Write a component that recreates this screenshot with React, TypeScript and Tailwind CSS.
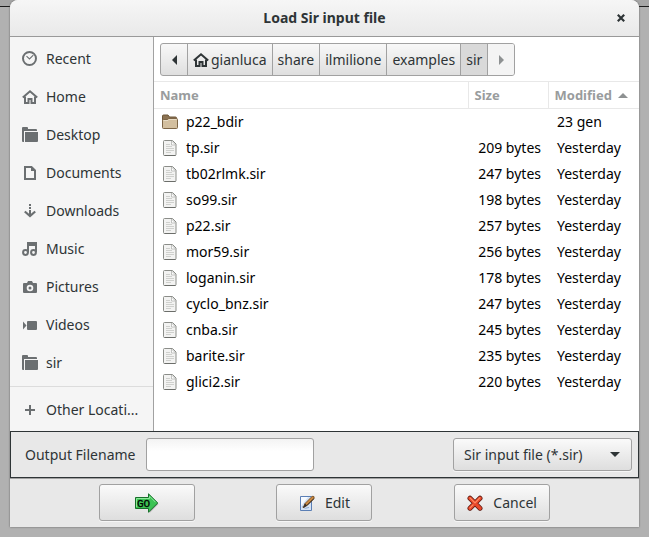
import { useState } from "react"

const iconClass = "size-4 shrink-0 text-[#6b6f71]"

const HomeShape: React.FC = () => (
    <>
        <path d="M.8 8.4 8 2.2l7.2 6.2" fill="none" stroke="currentColor" strokeWidth="2" />
        <path d="M3 7.5V14h3.5v-4h3v4H13V7.5" fill="none" stroke="currentColor" strokeWidth="2" />
    </>
)

const shapes: Record<string, React.ReactNode> = {
    recent: (
        <>
            <circle cx="7.5" cy="7.5" r="6.5" fill="none" stroke="currentColor" strokeWidth="2" />
            <path d="M4.5 5.2 7.5 8l3.8-3.8" fill="none" stroke="currentColor" strokeWidth="1.1" />
        </>
    ),
    home: <HomeShape />,
    folder: (
        <>
            <path d="M0 1q0-1 1-1h4q1 0 1 1v1h8q1 0 1 1v1H2v11H1q-1 0-1-1z" fill="currentColor" />
            <path d="M3 5h13v9q0 1-1 1H3z" fill="currentColor" />
        </>
    ),
    documents: (
        <>
            <path d="M3 2h6.5L13 5.5V14H3z" fill="none" stroke="currentColor" strokeWidth="2" />
            <path d="M9 2v4h4z" fill="currentColor" />
        </>
    ),
    downloads: (
        <>
            <path d="M7 1h2v2H7zM7 4h2v2H7zM7 7h2v6H7z" fill="currentColor" />
            <path d="M2.8 8.5 8 13l5.2-4.5" fill="none" stroke="currentColor" strokeWidth="2.2" />
        </>
    ),
    music: (
        <>
            <path d="M6 11.5V2h8v9M6 4h8" fill="none" stroke="currentColor" strokeWidth="2" />
            <circle cx="3.5" cy="11.5" r="2.4" fill="none" stroke="currentColor" strokeWidth="2" />
            <circle cx="11.5" cy="11.5" r="2.4" fill="none" stroke="currentColor" strokeWidth="2" />
        </>
    ),
    pictures: (
        <>
            <path d="M2 4h3l1-2h4l1 2h3q1 0 1 1v8q0 1-1 1H2q-1 0-1-1V5q0-1 1-1z" fill="currentColor" />
            <circle cx="8" cy="9" r="2.4" fill="none" stroke="#f5f5f5" strokeWidth="1.8" />
        </>
    ),
    videos: (
        <>
            <rect x="5" y="4" width="10" height="9" rx="1" fill="currentColor" />
            <path d="M1 4.5 4.5 8.5 1 12.5z" fill="currentColor" />
        </>
    ),
    plus: <path d="M8 3v10M3 8h10" stroke="currentColor" strokeWidth="2" />,
}

const places = [
    { name: "Recent", icon: "recent" },
    { name: "Home", icon: "home" },
    { name: "Desktop", icon: "folder" },
    { name: "Documents", icon: "documents" },
    { name: "Downloads", icon: "downloads" },
    { name: "Music", icon: "music" },
    { name: "Pictures", icon: "pictures" },
    { name: "Videos", icon: "videos" },
    { name: "sir", icon: "folder" },
]

const files = [
    { name: "p22_bdir", size: "", modified: "23 gen", folder: true },
    { name: "tp.sir", size: "209 bytes", modified: "Yesterday" },
    { name: "tb02rlmk.sir", size: "247 bytes", modified: "Yesterday" },
    { name: "so99.sir", size: "198 bytes", modified: "Yesterday" },
    { name: "p22.sir", size: "257 bytes", modified: "Yesterday" },
    { name: "mor59.sir", size: "256 bytes", modified: "Yesterday" },
    { name: "loganin.sir", size: "178 bytes", modified: "Yesterday" },
    { name: "cyclo_bnz.sir", size: "247 bytes", modified: "Yesterday" },
    { name: "cnba.sir", size: "245 bytes", modified: "Yesterday" },
    { name: "barite.sir", size: "235 bytes", modified: "Yesterday" },
    { name: "glici2.sir", size: "220 bytes", modified: "Yesterday" },
]

const Place: React.FC<any> = ({ name, icon }) => (
    <button type="button" className="flex h-[38px] w-full items-center gap-2 px-3 text-left">
        <svg viewBox="0 0 16 16" className={iconClass}>{shapes[icon]}</svg>
        <span className="whitespace-nowrap">{name}</span>
    </button>
)

const FolderIcon: React.FC = () => (
    <svg viewBox="0 0 16 16" className="size-4 shrink-0">
        <path d="M.5 12V2q0-1 1-1H6l1.5 2h6q1 0 1 1v3H.5z" fill="#8c7353" stroke="#6d5638" />
        <path d="M.5 13.5v-7q0-1 1-1h4l1-1h8q1 0 1 1v8q0 1-1 1h-13q-1 0-1-1z" fill="#d3bf9f" stroke="#7d6546" />
        <path d="M1.5 6.5H6l1-1h7.5" fill="none" stroke="#e8dcc5" />
    </svg>
)

const FileIcon: React.FC = () => (
    <svg viewBox="0 0 16 16" className="size-4 shrink-0">
        <path d="M2.5.5h8l3.5 3.5v10.5q0 1-1 1H2.5q-1 0-1-1v-13q0-1 1-1z" fill="#f3f3f2" stroke="#8b8d89" />
        <path d="M2.5 15.5h11" stroke="#6c6e6a" />
        <path d="M9.5 1v4h4z" fill="#fff" stroke="#b4b5b2" strokeWidth=".8" />
        <path d="M4 4.5h4M4 6.5h6M4 8.5h8M4 10.5h8M4 12.5h5" stroke="#cfd0cd" />
    </svg>
)

const GoIcon: React.FC = () => (
    <svg viewBox="0 0 24 20" className="h-5 w-6">
        <path d="M1.5 6.5h13V2l9 9-9 9v-4h-13z" fill="#00000040" />
        <path d="M.5 4.5h13V.8l9.3 9.2-9.3 9.2v-3.7H.5z" fill="#3cc354" stroke="#17702a" />
        <path d="M1.5 14V5.5h13V3.2l6 6" fill="none" stroke="#8be89a" />
        <text x="2" y="13.5" fontSize="11" fontFamily="Liberation Mono, monospace" fill="#000" stroke="#000" strokeWidth=".3">GO</text>
    </svg>
)

const EditIcon: React.FC = () => (
    <svg viewBox="0 0 16 16" className="size-4">
        <path d="M1.5 1.5h11v14h-11z" fill="#d5e3f5" stroke="#5b7fb5" />
        <path d="M2 2h7L2 11z" fill="#f6faff" />
        <path d="M3 11.5q3 3 7 1" fill="none" stroke="#8fabd2" />
        <path d="M4.2 12.7 6 8.5 13.2 1.3q2.4-.6 2 2L8 10.5z" fill="#c98840" stroke="#6b4218" strokeWidth=".8" />
        <path d="M4 13 6 8.5l2.2 2z" fill="#35302c" />
        <path d="M8 10.3 15 3.6" stroke="#3a2a1a" />
    </svg>
)

const CancelIcon: React.FC = () => (
    <svg viewBox="0 0 16 16" className="size-4">
        <path d="M3 3.2l10 10M13 3.2l-10 10" stroke="#5e1a12" strokeWidth="5" strokeLinecap="round" />
        <path d="M3 3.2l10 10M13 3.2l-10 10" stroke="#e8482a" strokeWidth="3.4" strokeLinecap="round" />
        <path d="M3 2.8l5 5 4.8-5M3 12.8l3-3" fill="none" stroke="#ff8a62" strokeWidth="1.2" strokeLinecap="round" />
    </svg>
)

const ActionButton: React.FC<any> = ({ label, text, children }) => (
    <button
        type="button"
        aria-label={label}
        className="flex h-[37px] w-24 items-center justify-center gap-2.5 justify-self-center rounded-[3px] border border-[#a1a1a1] bg-linear-to-b from-[#fafafa] to-[#dedede] shadow-[0_1px_0_#f6f6f6]"
    >
        {children}
        {text ? <span>{text}</span> : null}
    </button>
)

const segmentClass = "flex items-center border-r border-[#a1a1a1] px-[5px]"

const App: React.FC = () => {
    const [filename, setFilename] = useState("")
    const [filter, setFilter] = useState("sir")

    return (
        <div className="flex min-h-screen flex-col bg-[linear-gradient(#a6a6a6_6px,#1c1c1c_6px,#1c1c1c_7px,#b1b1b1_7px)] px-2.5 pb-2.5 font-['Noto_Sans',sans-serif] text-[14px] leading-5 text-[#2e3436]">
            <div className="flex grow flex-col overflow-hidden rounded-t-lg bg-[#e8e8e8] shadow-[0_0_2px_#555]">
                <header className="grid h-[37px] grid-cols-[36px_1fr_36px] items-center border-b border-[#999] bg-linear-to-b from-[#f6f6f6] to-[#e9e9e9]">
                    <h1 className="col-start-2 text-center font-bold">Load Sir input file</h1>
                    <button type="button" aria-label="Close" className="flex size-9 items-center justify-center">
                        <svg viewBox="0 0 8 8" className="size-2">
                            <path d="M.8.8l6.4 6.4M7.2.8.8 7.2" stroke="#2e3436" strokeWidth="2.2" />
                        </svg>
                    </button>
                </header>

                <div className="flex grow">
                    <nav className="flex w-36 shrink-0 flex-col border-r border-[#a1a1a1] bg-[#f5f5f5] pt-[3px]">
                        {places.map((place, i) => <Place key={i} name={place.name} icon={place.icon} />)}
                        <div className="mt-1 border-t border-[#dcdcdc] pt-1">
                            <Place name="Other Locati..." icon="plus" />
                        </div>
                    </nav>

                    <main className="min-w-0 grow bg-white">
                        <div className="flex px-1.5 pt-1.5 pb-[5px]">
                            <div className="flex h-[33px] overflow-hidden rounded-[3px] border border-[#a1a1a1] bg-linear-to-b from-[#f8f8f8] to-[#dfdfdf]">
                                <button type="button" aria-label="Back" className="flex w-[27px] items-center justify-center border-r border-[#a1a1a1]">
                                    <svg viewBox="0 0 5 10" className="h-2.5 w-[5px]"><path d="M5 0v10L0 5z" fill="#2e3436" /></svg>
                                </button>
                                <button type="button" className={segmentClass}>
                                    <svg viewBox="0 0 16 16" className="mr-0.5 size-4"><HomeShape /></svg>
                                    gianluca
                                </button>
                                <button type="button" className={segmentClass}>share</button>
                                <button type="button" className={segmentClass}>ilmilione</button>
                                <button type="button" className={segmentClass}>examples</button>
                                <button type="button" className="flex items-center border-r border-[#a1a1a1] bg-[#d9d9d9] px-[5px]">sir</button>
                                <button type="button" aria-label="Forward" className="flex w-[26px] items-center justify-center bg-[#f4f4f4]">
                                    <svg viewBox="0 0 5 10" className="h-2.5 w-[5px]"><path d="M0 0v10l5-5z" fill="#8e9192" /></svg>
                                </button>
                            </div>
                        </div>

                        <table className="w-full table-fixed text-black">
                            <colgroup>
                                <col />
                                <col className="w-20" />
                                <col className="w-[91px]" />
                            </colgroup>
                            <thead>
                                <tr className="h-[27px] border-y border-[#e8e8e8] text-left text-[13px] text-[#999c9d]">
                                    <th className="border-r border-[#e8e8e8] px-1.5">Name</th>
                                    <th className="border-r border-[#e8e8e8] px-1.5">Size</th>
                                    <th className="px-1.5">
                                        <span className="flex items-center gap-1.5">
                                            Modified
                                            <svg viewBox="0 0 10 5" className="h-[5px] w-2.5"><path d="M0 5h10L5 0z" fill="#8e9192" /></svg>
                                        </span>
                                    </th>
                                </tr>
                            </thead>
                            <tbody>
                                {files.map((file, i) => (
                                    <tr key={i} className="h-[26px]">
                                        <td className="pl-2">
                                            <span className="flex items-center gap-2">
                                                {file.folder ? <FolderIcon /> : <FileIcon />}
                                                {file.name}
                                            </span>
                                        </td>
                                        <td className="pr-[7px] text-right whitespace-nowrap">{file.size}</td>
                                        <td className="pl-[9px]">{file.modified}</td>
                                    </tr>
                                ))}
                            </tbody>
                        </table>
                    </main>
                </div>

                <div className="flex h-[47px] items-center border border-[#2e3436] pr-1.5 pl-3.5">
                    <label htmlFor="filename">Output Filename</label>
                    <input
                        id="filename"
                        value={filename}
                        onChange={(e) => setFilename(e.target.value)}
                        className="ml-[11px] h-[33px] w-[168px] rounded-[3px] border border-[#a1a1a1] bg-linear-to-b from-[#f3f3f3] to-white to-40% px-2 outline-none"
                    />
                    <div className="relative ml-auto">
                        <select
                            aria-label="File type"
                            value={filter}
                            onChange={(e) => setFilter(e.target.value)}
                            className="h-[33px] w-[179px] appearance-none rounded-[3px] border border-[#a1a1a1] bg-linear-to-b from-[#fafafa] to-[#dedede] px-2.5 shadow-[0_1px_0_#f6f6f6]"
                        >
                            <option value="sir">Sir input file (*.sir)</option>
                        </select>
                        <svg viewBox="0 0 10 5" className="pointer-events-none absolute top-3.5 right-3 h-[5px] w-2.5"><path d="M0 0h10L5 5z" fill="#2e3436" /></svg>
                    </div>
                </div>

                <div className="grid h-[49px] grid-cols-3 items-start border-t border-[#a1a1a1] px-12 pt-[5px]">
                    <ActionButton label="Go"><GoIcon /></ActionButton>
                    <ActionButton text="Edit"><EditIcon /></ActionButton>
                    <ActionButton text="Cancel"><CancelIcon /></ActionButton>
                </div>
            </div>
        </div>
    )
}

export default App
